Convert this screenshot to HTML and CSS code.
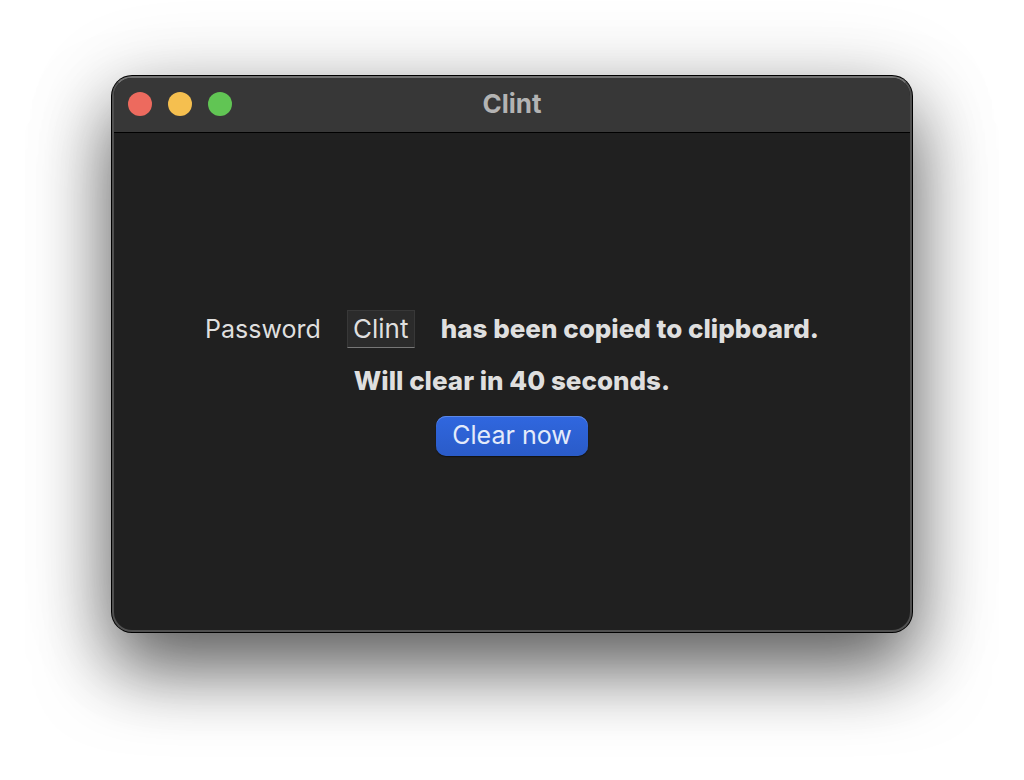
FILE: index.html
```html
<!DOCTYPE html>
<html lang="en">
<head>
<meta charset="utf-8">
<title>Clint</title>
<link rel="stylesheet" href="styles.css">
</head>
<body>
<main class="window">
  <header class="titlebar">
    <div class="controls">
      <button class="control close" aria-label="Close"></button>
      <button class="control minimize" aria-label="Minimize"></button>
      <button class="control zoom" aria-label="Zoom"></button>
    </div>
    <h1 class="title">Clint</h1>
  </header>
  <section class="content">
    <div class="message">
      <label class="label" for="entry">Password</label>
      <input class="entry" id="entry" type="text" value="Clint" readonly>
      <strong>has been copied to clipboard.</strong>
    </div>
    <strong class="countdown">Will clear in 40 seconds.</strong>
    <button class="clear" type="button">Clear now</button>
  </section>
</main>
</body>
</html>
```
FILE: styles.css
```css
* { box-sizing: border-box; }
body {
  margin: 0;
  min-height: 100vh;
  padding: 76px 112px 148px;
  display: flex;
  background: #fff;
  color: #dfdfdf;
  font: 25px/32px Inter, sans-serif;
}
.window {
  flex: 1;
  display: flex;
  flex-direction: column;
  border: 2px solid #505050;
  border-top-color: #727272;
  border-radius: 20px;
  overflow: hidden;
  background: #202020;
  box-shadow: 0 0 0 1px #000, 0 38px 72px rgba(0, 0, 0, .56), 0 12px 90px rgba(0, 0, 0, .2);
}
.titlebar {
  height: 55px;
  padding: 0 14px 2px;
  display: grid;
  grid-template-columns: 1fr auto 1fr;
  align-items: center;
  background: #373737;
  border-bottom: 1px solid #000;
}
.controls { display: flex; gap: 16px; }
.control { width: 24px; height: 24px; padding: 0; border: 0; border-radius: 50%; }
.close { background: #ed6a5e; }
.minimize { background: #f5bf4f; }
.zoom { background: #61c554; }
.title { margin: 0; font-size: 26px; line-height: 32px; font-weight: 700; color: #b3b3b3; }
.content {
  flex: 1;
  display: flex;
  flex-direction: column;
  align-items: center;
  justify-content: center;
  padding-top: 2px;
}
.message { display: flex; align-items: center; }
.message strong, .countdown { font-size: 26px; font-weight: 800; }
.entry {
  width: 68px;
  height: 38px;
  margin: 0 26px;
  padding: 0;
  border: 1px solid #383838;
  border-bottom-color: #777;
  background: #2b2b2b;
  color: inherit;
  font: inherit;
  font-size: 26px;
  text-align: center;
}
.countdown { margin: 17px 0 19px; }
.clear {
  width: 152px;
  height: 40px;
  padding: 0 0 2px;
  border: 0;
  border-radius: 10px;
  background: linear-gradient(#3067df, #2a5bc8);
  box-shadow: inset 0 1px #5c88e6, 0 1px 1px #111;
  color: #e4ebfa;
  font: inherit;
}
```
